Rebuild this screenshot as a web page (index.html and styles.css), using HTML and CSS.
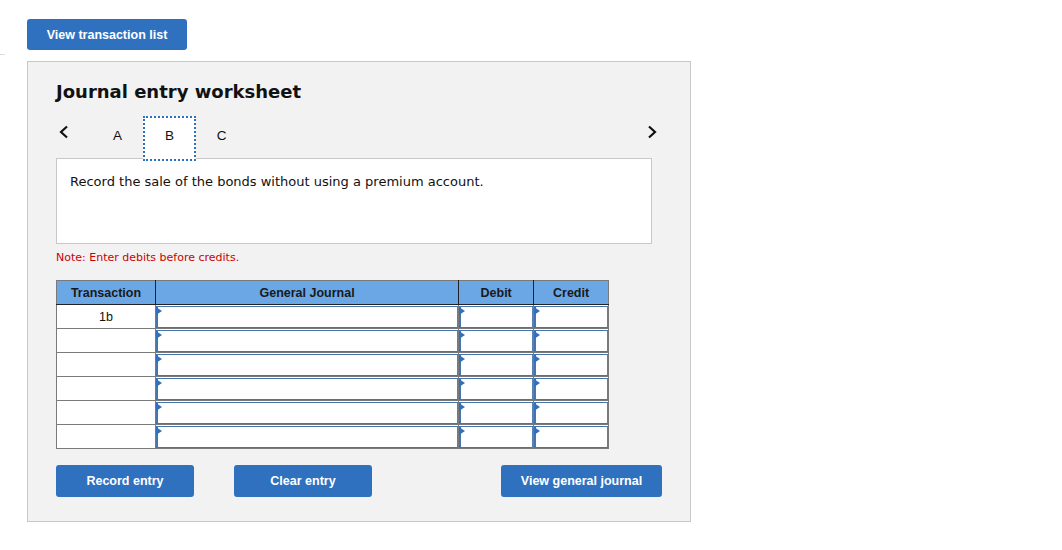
FILE: index.html
```html
<!DOCTYPE html>
<html lang="en">
<head>
  <meta charset="UTF-8" />
  <title>Journal entry worksheet</title>
  <link rel="stylesheet" href="styles.css">
</head>
<body>
  <div class="edge-mark"></div>
  <button class="btn btn-top">View transaction list</button>

  <div class="panel">
    <h2>Journal entry worksheet</h2>

    <div class="tabs">
      <span class="chev">
        <svg width="12" height="14" viewBox="0 0 12 14"><path d="M9 1.5 L3 7 L9 12.5" fill="none" stroke="#111" stroke-width="2.2"/></svg>
      </span>
      <span class="tab">A</span>
      <span class="tab active">B</span>
      <span class="tab">C</span>
      <span class="chev chev-right">
        <svg width="12" height="14" viewBox="0 0 12 14"><path d="M3 1.5 L9 7 L3 12.5" fill="none" stroke="#111" stroke-width="2.2"/></svg>
      </span>
    </div>

    <div class="instruction">Record the sale of the bonds without using a premium account.</div>

    <p class="note">Note: Enter debits before credits.</p>

    <table class="journal">
      <thead>
        <tr>
          <th class="c-trans">Transaction</th>
          <th class="c-gj">General Journal</th>
          <th class="c-amt">Debit</th>
          <th class="c-amt">Credit</th>
        </tr>
      </thead>
      <tbody id="rows"></tbody>
    </table>

    <div class="actions">
      <button class="btn btn-record">Record entry</button>
      <button class="btn btn-clear">Clear entry</button>
      <button class="btn btn-view">View general journal</button>
    </div>
  </div>

  <script>
    const rows = document.getElementById('rows');
    for (let i = 0; i < 6; i++) {
      const tr = document.createElement('tr');
      tr.innerHTML =
        '<td class="c-trans">' + (i === 0 ? '1b' : '') + '</td>' +
        '<td class="inp"><span class="flag"></span><input type="text"></td>' +
        '<td class="inp"><span class="flag"></span><input type="text"></td>' +
        '<td class="inp"><span class="flag"></span><input type="text"></td>';
      rows.appendChild(tr);
    }
  </script>
</body>
</html>
```

FILE: styles.css
```css
* {
  box-sizing: border-box;
}

body {
  margin: 0;
  padding: 19px 0 0 27px;
  background: #fff;
  font-family: "DejaVu Sans", Verdana, sans-serif;
  color: #111;
  position: relative;
}

.edge-mark {
  position: absolute;
  left: 0;
  top: 54px;
  width: 5px;
  height: 1px;
  background: #ddd;
}

.btn {
  display: block;
  height: 32px;
  border: none;
  border-radius: 3px;
  background: #2f71bf;
  color: #fff;
  font-family: "Liberation Sans", Arial, sans-serif;
  font-weight: bold;
  font-size: 12.5px;
  cursor: pointer;
}

.btn-top {
  width: 160px;
  height: 31px;
}

.panel {
  margin-top: 11px;
  width: 664px;
  height: 461px;
  background: #f2f2f2;
  border: 1px solid #c8c8c8;
  padding: 18px 0 0 28px;
}

h2 {
  margin: 0;
  font-size: 18px;
  font-weight: bold;
  height: 24px;
  line-height: 24px;
}

.tabs {
  display: flex;
  align-items: flex-start;
  width: 604px;
  height: 45px;
  margin-top: 12px;
  margin-bottom: -3px;
  position: relative;
  z-index: 1;
}

.chev {
  width: 36px;
  padding: 9px 0 0 2px;
  line-height: 0;
}

.chev-right {
  margin-left: auto;
  width: 14px;
  padding-left: 0;
}

.tab {
  width: 51px;
  height: 45px;
  padding-top: 12px;
  line-height: 16px;
  text-align: center;
  font-family: "Liberation Sans", Arial, sans-serif;
  font-size: 13.5px;
}

.tab.active {
  width: 53px;
  padding-top: 10px;
  background: #fff;
  border: 2px dotted #2f71bf;
}

.instruction {
  width: 596px;
  height: 86px;
  background: #fff;
  border: 1px solid #c8c8c8;
  padding: 15px 13px;
  font-size: 13px;
}

.note {
  margin: 7px 0 0;
  font-size: 11px;
  color: #cc0000;
  height: 14px;
  line-height: 14px;
}

.journal {
  margin-top: 15px;
  border-collapse: collapse;
  width: 553px;
  font-family: "Liberation Sans", Arial, sans-serif;
  font-size: 12.5px;
}

.journal th,
.journal td {
  border: 1px solid #7a7a7a;
  height: 24px;
  padding: 0;
}

.journal th {
  background: #6ba6e5;
  color: #1a1a1a;
  font-weight: bold;
  border-right-color: #222;
  border-bottom-color: #222;
}

.journal th:last-child {
  border-right-color: #7a7a7a;
}

.c-trans {
  width: 99px;
  text-align: center;
  background: #fff;
}

.c-gj {
  width: 304px;
}

.c-amt {
  width: 75px;
}

.journal td.inp {
  background: #fff;
  position: relative;
  padding: 1px 0 0 0;
}

.journal td.inp input {
  display: block;
  width: 100%;
  height: 22px;
  border: 1px solid #4574b0;
  border-left-width: 2px;
  border-right-color: #5b7fae;
  background: #fff;
  font-size: 12px;
  margin: 0;
  outline: none;
}

.flag {
  position: absolute;
  left: 0;
  top: 2px;
  width: 0;
  height: 0;
  border-top: 4px solid transparent;
  border-bottom: 4px solid transparent;
  border-left: 6px solid #2f71bf;
}

.actions {
  display: flex;
  margin-top: 16px;
  width: 606px;
}

.btn-record,
.btn-clear {
  width: 138px;
}

.btn-clear {
  margin-left: 40px;
}

.btn-view {
  width: 161px;
  margin-left: auto;
}
```
